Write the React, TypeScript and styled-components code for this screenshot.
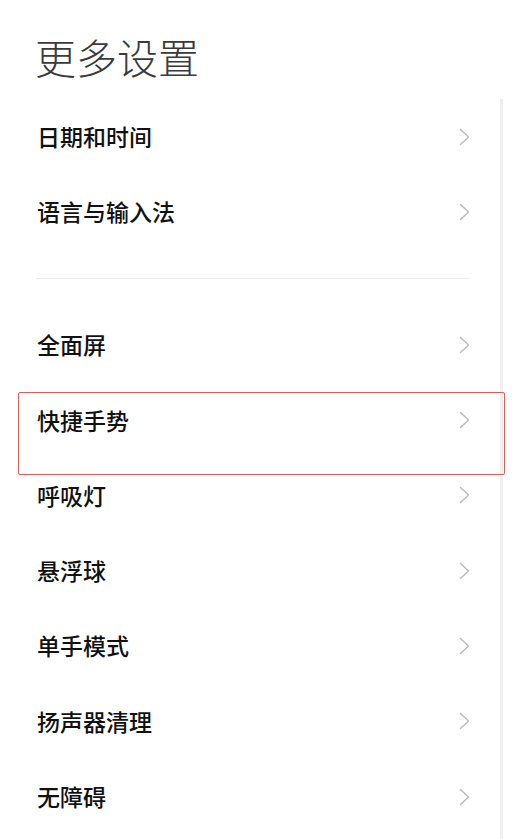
import React from "react";
import styled, { createGlobalStyle } from "styled-components";

const GlobalStyle = createGlobalStyle`
  html, body {
    margin: 0;
    padding: 0;
    background: #ffffff;
  }
  body {
    font-family: "Noto Sans CJK SC", "Noto Sans", sans-serif;
  }
`;

const groups = [
  ["日期和时间", "语言与输入法"],
  ["全面屏", "快捷手势", "呼吸灯", "悬浮球", "单手模式", "扬声器清理", "无障碍"],
];

function Chevron() {
  return (
    <svg width="11" height="18" viewBox="0 0 11 18">
      <polyline
        points="1.5,1.5 9.5,9 1.5,16.5"
        fill="none"
        stroke="#b9b9b9"
        strokeWidth="1.4"
        strokeLinecap="round"
        strokeLinejoin="round"
      />
    </svg>
  );
}

export default function App() {
  return (
    <Page>
      <GlobalStyle />
      <Title>更多设置</Title>
      <List>
        {groups.map((items, gi) => (
          <React.Fragment key={gi}>
            {gi > 0 && <Divider />}
            <Group>
              {items.map((label) => (
                <Row key={label}>
                  <Label>{label}</Label>
                  <Chevron />
                </Row>
              ))}
            </Group>
          </React.Fragment>
        ))}
      </List>
      <Highlight />
    </Page>
  );
}

const Page = styled.div`
  position: relative;
  width: 514px;
  height: 839px;
  overflow: hidden;
  background: #fff;
`;

const Title = styled.h1`
  margin: 0;
  padding: 28px 0 0 35px;
  height: 99px;
  box-sizing: border-box;
  font-size: 41px;
  line-height: 56px;
  font-weight: 300;
  color: #3a3a3a;
  letter-spacing: 0;
`;

const List = styled.div`
  width: 503px;
  box-sizing: border-box;
  border-right: 3px solid #efefef;
  min-height: 740px;
`;

const Group = styled.div`
  display: flex;
  flex-direction: column;
`;

const Row = styled.div`
  display: flex;
  align-items: center;
  justify-content: space-between;
  height: 75.3px;
  padding: 0 30px 0 37px;
`;

const Label = styled.span`
  font-size: 23px;
  font-weight: 500;
  color: #111;
  line-height: 1;
`;

const Divider = styled.div`
  height: 1.5px;
  background: #eeeeee;
  margin: 28px 30px 28px 36px;
`;

const Highlight = styled.div`
  position: absolute;
  left: 18px;
  top: 392px;
  width: 487px;
  height: 83px;
  box-sizing: border-box;
  border: 1.5px solid #d9605a;
  border-radius: 2px;
  pointer-events: none;
`;
